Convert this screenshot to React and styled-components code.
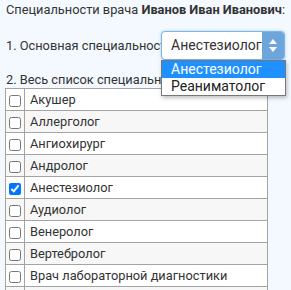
import React from 'react';
import styled, { createGlobalStyle } from 'styled-components';

const GlobalStyle = createGlobalStyle`
    body {
        margin: 0;
        background: #f3f9ff;
        font-family: Roboto, "Liberation Sans", Arial, sans-serif;
        color: #333;
    }
`;

const Page = styled.div`
    padding: 0 6px 0 5px;
    font-size: 12.8px;
`;

const Heading = styled.div`
    height: 20px;
    line-height: 20px;
    padding-left: 1px;
    margin-bottom: 11px;
    white-space: nowrap;
`;

const MainRow = styled.div`
    display: flex;
    align-items: center;
    height: 29px;
    white-space: nowrap;
`;

const Label = styled.div`
    width: 155px;
    padding-left: 1px;
`;

const SelectWrap = styled.div`
    position: relative;
    z-index: 1;
    width: 125px;
    height: 29px;
`;

const SelectBox = styled.div`
    display: flex;
    height: 100%;
    box-sizing: border-box;
    border: 1px solid #7fb2e5;
    border-radius: 4px;
    background: #fff;
    box-shadow: 0 0 3px rgba(102, 175, 233, 0.6);
    overflow: hidden;
`;

const SelectValue = styled.div`
    flex: 1;
    padding-left: 9px;
    line-height: 27px;
    font-size: 14px;
`;

const SelectButton = styled.div`
    width: 22px;
    background: #6ea6dc;
    display: flex;
    flex-direction: column;
    align-items: center;
    justify-content: center;
    gap: 3px;
`;

const Arrow = styled.span`
    width: 0;
    height: 0;
    border-left: 4px solid transparent;
    border-right: 4px solid transparent;
    ${p => p.up ? 'border-bottom: 5px solid #fff;' : 'border-top: 5px solid #fff;'}
`;

const Dropdown = styled.div`
    position: absolute;
    top: 29px;
    left: 0;
    width: 125px;
    box-sizing: border-box;
    border: 1px solid #777;
    background: #fff;
    box-shadow: 1px 2px 4px rgba(0, 0, 0, 0.25);
    z-index: 2;
`;

const Option = styled.div`
    height: 17px;
    line-height: 17px;
    padding-left: 9px;
    font-size: 14px;
    color: ${p => p.active ? '#fff' : '#222'};
    background: ${p => p.active ? '#1e90ff' : 'transparent'};
`;

const SubLabel = styled.div`
    margin-top: 12px;
    height: 16px;
    line-height: 16px;
    padding-left: 1px;
    white-space: nowrap;
`;

const ListBox = styled.div`
    width: 280px;
    height: 250px;
    overflow-y: scroll;
`;

const Table = styled.table`
    width: 263px;
    border-collapse: collapse;
    font-size: 12.8px;
`;

const Row = styled.tr`
    background: ${p => p.odd ? '#f7f7f7' : '#fff'};
`;

const CheckCell = styled.td`
    width: 18px;
    height: 21px;
    padding: 0;
    border: 1px solid #a3a3a3;
    text-align: center;
    vertical-align: middle;

    input {
        margin: 0;
        width: 12px;
        height: 12px;
        vertical-align: middle;
    }
`;

const NameCell = styled.td`
    padding: 0 0 0 5px;
    border: 1px solid #a3a3a3;
    color: #333;
    white-space: nowrap;
`;

const specialties = [
    'Акушер',
    'Аллерголог',
    'Ангиохирург',
    'Андролог',
    'Анестезиолог',
    'Аудиолог',
    'Венеролог',
    'Вертебролог',
    'Врач лабораторной диагностики',
    'Гастроэнтеролог',
    'Гематолог',
    'Генетик',
    'Гепатолог',
    'Гинеколог',
    'Дерматолог',
    'Диетолог',
    'Иммунолог',
    'Инфекционист',
    'Кардиолог',
    'Косметолог',
    'Логопед',
    'Маммолог',
    'Нарколог',
    'Невролог',
    'Нейрохирург',
    'Нефролог',
    'Онколог',
    'Ортопед',
    'Офтальмолог',
    'Педиатр',
    'Психиатр',
    'Реаниматолог'
];

export default function App() {
    return (
        <Page>
            <GlobalStyle/>
            <Heading>
                Специальности врача <b>Иванов Иван Иванович</b>:
            </Heading>
            <MainRow>
                <Label>1. Основная специальность</Label>
                <SelectWrap>
                    <SelectBox>
                        <SelectValue>Анестезиолог</SelectValue>
                        <SelectButton>
                            <Arrow up/>
                            <Arrow/>
                        </SelectButton>
                    </SelectBox>
                    <Dropdown>
                        <Option active>Анестезиолог</Option>
                        <Option>Реаниматолог</Option>
                    </Dropdown>
                </SelectWrap>
            </MainRow>
            <SubLabel>2. Весь список специальностей:</SubLabel>
            <ListBox>
                <Table>
                    <tbody>
                        {specialties.map((name, i) => (
                            <Row key={name} odd={i % 2 === 1}>
                                <CheckCell>
                                    <input type="checkbox" defaultChecked={name === 'Анестезиолог'}/>
                                </CheckCell>
                                <NameCell>{name}</NameCell>
                            </Row>
                        ))}
                    </tbody>
                </Table>
            </ListBox>
        </Page>
    );
}
